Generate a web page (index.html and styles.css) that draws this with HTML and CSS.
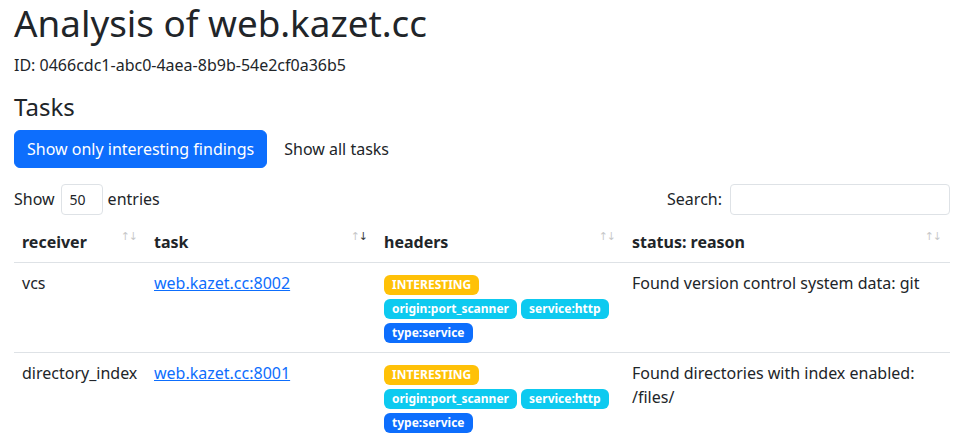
FILE: index.html
```html
<!DOCTYPE html>
<html lang="en">
<head>
<meta charset="utf-8">
<title>Analysis of web.kazet.cc</title>
<link rel="stylesheet" href="styles.css">
</head>
<body>
<div class="page">
  <h1 class="title">Analysis of web.kazet.cc</h1>
  <p class="ident">ID: 0466cdc1-abc0-4aea-8b9b-54e2cf0a36b5</p>
  <h2 class="section">Tasks</h2>
  <div class="filters">
    <button class="btn btn-primary" type="button">Show only interesting findings</button>
    <button class="btn btn-plain" type="button">Show all tasks</button>
  </div>
  <div class="dt-controls">
    <label class="dt-length">Show <select class="dt-select"><option>50</option></select> entries</label>
    <label class="dt-search">Search: <input class="dt-input" type="search"></label>
  </div>
  <table class="dt-table">
    <colgroup>
      <col class="c-receiver"><col class="c-task"><col class="c-headers"><col class="c-status">
    </colgroup>
    <thead>
      <tr>
        <th class="sortable">receiver</th>
        <th class="sortable sorted-desc">task</th>
        <th class="sortable">headers</th>
        <th class="sortable">status: reason</th>
      </tr>
    </thead>
    <tbody>
      <tr>
        <td>vcs</td>
        <td><a href="#">web.kazet.cc:8002</a></td>
        <td class="tags">
          <span class="badge bg-warning">INTERESTING</span><br>
          <span class="badge bg-info">origin:port_scanner</span> <span class="badge bg-info">service:http</span><br>
          <span class="badge bg-primary">type:service</span>
        </td>
        <td>Found version control system data: git</td>
      </tr>
      <tr>
        <td>directory_index</td>
        <td><a href="#">web.kazet.cc:8001</a></td>
        <td class="tags">
          <span class="badge bg-warning">INTERESTING</span><br>
          <span class="badge bg-info">origin:port_scanner</span> <span class="badge bg-info">service:http</span><br>
          <span class="badge bg-primary">type:service</span>
        </td>
        <td>Found directories with index enabled: /files/</td>
      </tr>
    </tbody>
  </table>
</div>
</body>
</html>
```

FILE: styles.css
```css
* { box-sizing: border-box; }
html, body { margin: 0; padding: 0; }
body {
  font-family: "Noto Sans", "DejaVu Sans", sans-serif;
  font-size: 16px;
  line-height: 1.5;
  color: #212529;
  background: #fff;
}
.page {
  padding: 1px 8px 0 14px;
}
.title {
  font-size: 36.8px;
  font-weight: 400;
  line-height: 1.2;
  margin: 0 0 8px;
}
.ident {
  margin: 0 0 16px;
}
.section {
  font-size: 24px;
  font-weight: 400;
  line-height: 1.2;
  margin: 0 0 8px;
}
.filters {
  display: flex;
  gap: 4px;
}
.btn {
  font-family: inherit;
  font-size: 16px;
  line-height: 1.5;
  padding: 6px 12px;
  border: 1px solid transparent;
  border-radius: 6px;
  cursor: pointer;
}
.btn-primary {
  background: #0d6efd;
  border-color: #0d6efd;
  color: #fff;
}
.btn-plain {
  background: transparent;
  color: #212529;
}
.dt-controls {
  display: flex;
  justify-content: space-between;
  align-items: center;
  margin-top: 16px;
  height: 31px;
}
.dt-length, .dt-search {
  display: flex;
  align-items: center;
}
.dt-select {
  -webkit-appearance: none;
  appearance: none;
  width: 42px;
  height: 31px;
  margin: 0 5px 0 6px;
  padding: 4px 8px;
  font-family: inherit;
  font-size: 14px;
  color: #212529;
  background: #fff;
  border: 1px solid #dee2e6;
  border-radius: 4px;
}
.dt-input {
  width: 220px;
  height: 31px;
  margin-left: 8px;
  padding: 4px 8px;
  font-family: inherit;
  font-size: 14px;
  border: 1px solid #dee2e6;
  border-radius: 4px;
  outline: none;
}
.dt-table {
  width: 100%;
  table-layout: fixed;
  border-collapse: collapse;
  margin-top: 7px;
}
.c-receiver { width: 132px; }
.c-task { width: 230px; }
.c-headers { width: 248px; }
.c-status { width: auto; }
.dt-table th, .dt-table td {
  padding: 8px;
  text-align: left;
  vertical-align: top;
  border-bottom: 1px solid #dee2e6;
}
.dt-table td {
  padding-bottom: 9px;
}
.dt-table th {
  font-weight: 700;
  position: relative;
  padding-right: 26px;
}
.sortable::before, .sortable::after {
  position: absolute;
  top: 9px;
  font-family: "DejaVu Sans", sans-serif;
  font-size: 11px;
  font-weight: 400;
  line-height: 1;
  color: #212529;
  opacity: 0.25;
}
.sortable::before { content: "\2191"; right: 16px; }
.sortable::after { content: "\2193"; right: 8px; }
.sorted-desc::after { opacity: 0.9; }
.dt-table a {
  color: #0d6efd;
  text-decoration: underline;
}
.badge {
  display: inline-block;
  padding: 4px 8px;
  font-size: 12px;
  font-weight: 700;
  line-height: 1;
  color: #fff;
  white-space: nowrap;
  vertical-align: baseline;
  border-radius: 6px;
}
.bg-warning { background: #ffc107; }
.bg-info { background: #0dcaf0; }
.bg-primary { background: #0d6efd; }
```
